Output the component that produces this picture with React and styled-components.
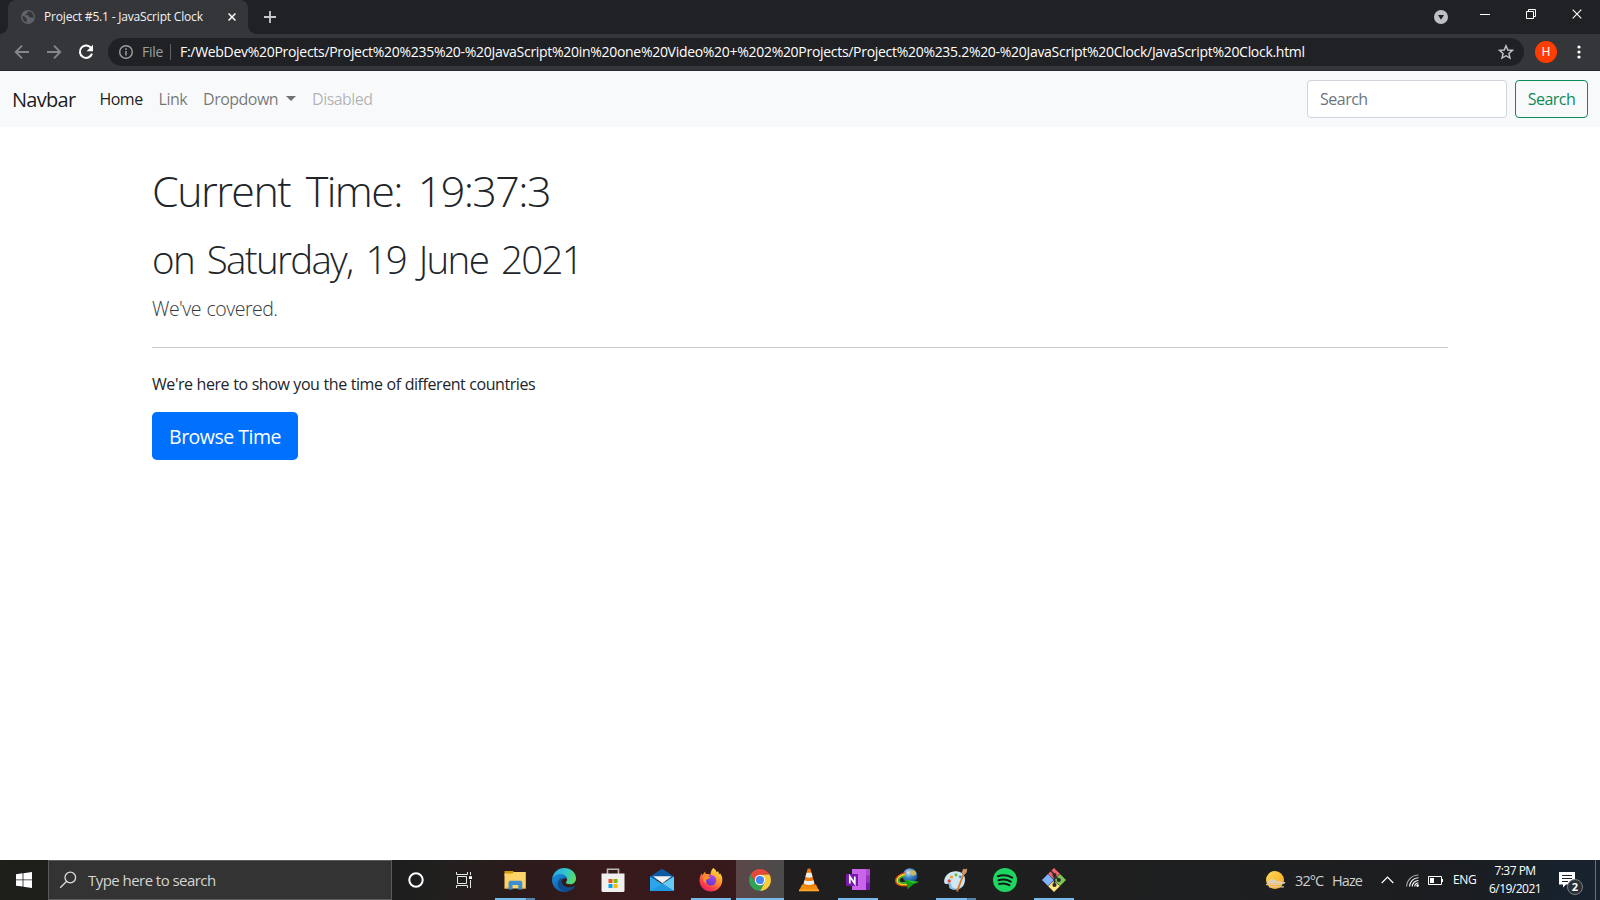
import React from 'react';
import styled, { createGlobalStyle, css } from 'styled-components';

const GlobalStyle = createGlobalStyle`
  * { box-sizing: border-box; }
  html, body { margin: 0; padding: 0; overflow: hidden; }
  body { font-family: "Open Sans", "Noto Sans", sans-serif; background: #fff; color: #212529; }
  svg { display: block; flex: none; }
  button, input { font-family: inherit; margin: 0; }
`;

const Screen = styled.div`
  width: 1600px;
  height: 900px;
  display: flex;
  flex-direction: column;
  white-space: nowrap;
`;

/* ---------- Browser chrome ---------- */
const TabStrip = styled.header`
  height: 34px;
  background: #202124;
  display: flex;
  padding-left: 8px;
`;
const Tab = styled.div`
  position: relative;
  width: 240px;
  height: 34px;
  padding: 0 12px 0 13px;
  display: flex;
  align-items: center;
  background: #35363a;
  border-radius: 8px 8px 0 0;
  &::before, &::after {
    content: "";
    position: absolute;
    bottom: 0;
    width: 8px;
    height: 8px;
  }
  &::before { left: -8px; background: radial-gradient(circle at 0 0, transparent 7.5px, #35363a 8px); }
  &::after { right: -8px; background: radial-gradient(circle at 100% 0, transparent 7.5px, #35363a 8px); }
`;
const TabTitle = styled.span`
  flex: 1;
  margin-left: 9px;
  font-size: 12px;
  line-height: 16px;
  letter-spacing: -0.18px;
  color: #f1f3f4;
`;
const NewTab = styled.div`
  width: 28px;
  margin-left: 8px;
  display: grid;
  place-items: center;
`;
const WindowControls = styled.div`
  margin-left: auto;
  display: flex;
  align-items: flex-start;
`;
const TabSearch = styled.div`
  padding: 10px 14px 0 0;
`;
const WindowButton = styled.div`
  width: 46px;
  height: 28px;
  display: grid;
  place-items: center;
`;
const Toolbar = styled.div`
  height: 37px;
  background: #35363a;
  border-bottom: 1px solid #27282b;
  display: flex;
  align-items: center;
  padding: 0 19px 0 14px;
`;
const NavIcons = styled.div`
  display: flex;
  gap: 16px;
  width: 94px;
`;
const AddressBar = styled.div`
  flex: 1;
  height: 28px;
  border-radius: 14px;
  background: #202124;
  display: flex;
  align-items: center;
  padding: 0 10px;
  font-size: 14px;
  line-height: 20px;
`;
const Scheme = styled.span`
  width: 29px;
  margin-left: 8px;
  color: #9aa0a6;
  letter-spacing: -0.3px;
  border-right: 1px solid #5f6368;
  line-height: 16px;
`;
const Address = styled.span`
  flex: 1;
  margin-left: 9px;
  color: #fff;
  letter-spacing: -0.297px;
`;
const Avatar = styled.div`
  width: 22px;
  height: 22px;
  margin: 0 20px 0 11px;
  border-radius: 50%;
  background: #ff3d00;
  color: #fff;
  font: 12px/22px Roboto, sans-serif;
  text-align: center;
`;

/* ---------- Web page ---------- */
const Navbar = styled.nav`
  height: 56px;
  padding: 0 12px;
  background: #f8f9fa;
  display: flex;
  align-items: center;
`;
const Brand = styled.span`
  width: 79.5px;
  padding-top: 1px;
  font-size: 20px;
  line-height: 30px;
  letter-spacing: -0.7px;
  color: rgba(0, 0, 0, 0.9);
`;
const NavLink = styled.span`
  padding: 0 8px;
  display: flex;
  align-items: center;
  font-size: 16px;
  line-height: 24px;
  letter-spacing: -0.53px;
  color: ${(p) => (p.$active ? 'rgba(0,0,0,.9)' : p.$disabled ? 'rgba(0,0,0,.3)' : 'rgba(0,0,0,.55)')};
`;
const Caret = styled.i`
  margin: -2px 0 0 8px;
  border: 5px solid transparent;
  border-top-color: currentColor;
  border-bottom: 0;
`;
const SearchForm = styled.form`
  margin-left: auto;
  display: flex;
  gap: 8px;
`;
const SearchInput = styled.input`
  width: 200px;
  height: 38px;
  padding: 0 12px;
  border: 1px solid #ced4da;
  border-radius: 4px;
  background: #fff;
  font-size: 16px;
  letter-spacing: -0.5px;
  &::placeholder { color: #6c757d; opacity: 1; }
`;
const SearchButton = styled.button`
  width: 73px;
  height: 38px;
  padding: 0;
  border: 1px solid #0d8a5a;
  border-radius: 4px;
  background: transparent;
  color: #0d8a5a;
  font-size: 16px;
  letter-spacing: -0.5px;
`;
const Main = styled.main`
  flex: 1;
  padding: 37px 152px 0;
`;
const Title = styled.h1`
  margin: 0 0 17px;
  font-weight: 300;
  font-size: 43px;
  line-height: 54px;
  letter-spacing: -1.55px;
  word-spacing: 6px;
`;
const Subtitle = styled.h2`
  margin: 0 0 11px;
  font-weight: 300;
  font-size: 38.5px;
  line-height: 48px;
  letter-spacing: -1.7px;
  word-spacing: 4.5px;
`;
const Lead = styled.p`
  margin: 0;
  font-weight: 300;
  font-size: 19.5px;
  line-height: 30px;
  letter-spacing: -0.5px;
  word-spacing: 1px;
  color: #343a40;
`;
const Rule = styled.hr`
  margin: 23px 0 24px;
  height: 1px;
  border: 0;
  background: #c7c9ca;
`;
const Copy = styled.p`
  margin: 0 0 16px;
  font-size: 16px;
  line-height: 24px;
  letter-spacing: -0.44px;
  word-spacing: 0.3px;
`;
const PrimaryButton = styled.button`
  width: 146px;
  height: 48px;
  padding: 0;
  border: 0;
  border-radius: 4.8px;
  background: #0070ff;
  color: #fff;
  font-size: 19.5px;
  letter-spacing: -0.5px;
`;

/* ---------- Taskbar ---------- */
const Taskbar = styled.footer`
  height: 40px;
  display: flex;
  background: linear-gradient(90deg, #1e1e1a 0, #1d1d1d 390px, #21201f 440px, #2b1b1b 520px, #381a1c 610px, #38191b 730px, #201e1e 785px, #1e1f20 1200px, #1b1d20 1460px, #18222c 1560px, #19232d 1600px);
`;
const StartButton = styled.div`
  width: 48px;
  display: grid;
  place-items: center;
`;
const TaskSearch = styled.div`
  width: 344px;
  height: 40px;
  padding-left: 10px;
  display: flex;
  align-items: center;
  background: #333;
  border: 1px solid #5b5b5b;
  color: #d4d4d4;
  font-size: 15px;
  letter-spacing: -0.55px;
`;
const TaskSearchText = styled.span`
  margin-left: 11px;
`;
const SystemButtons = styled.div`
  display: flex;
  width: 98.5px;
`;
const SystemButton = styled.div`
  width: 48px;
  display: grid;
  place-items: center;
`;
const Apps = styled.div`
  display: flex;
`;
const TaskbarApp = styled.div`
  width: 49px;
  height: 40px;
  display: flex;
  justify-content: center;
  align-items: center;
  background: linear-gradient(#76b9ed, #76b9ed) no-repeat 50% 100% / ${(p) => (p.$running ? '40px 2px' : '0 0')};
  ${(p) => p.$stacked && css`
    background: linear-gradient(90deg, #76b9ed 31px, #3f5f7a 31px, #5583aa 32px) no-repeat 50% 100% / 40px 2px;
  `}
  ${(p) => p.$focused && css`
    background:
      linear-gradient(#76b9ed, #76b9ed) no-repeat 50% 100% / 48px 2px,
      linear-gradient(90deg, #5d4748, #4b4b4b) no-repeat 50% 0 / 48px 40px;
  `}
`;
const Tray = styled.div`
  margin-left: auto;
  display: flex;
  align-items: center;
  color: #fff;
`;
const Weather = styled.div`
  display: flex;
  align-items: center;
  width: 115.5px;
  color: #cfcfcf;
  font-size: 14.5px;
  letter-spacing: -0.9px;
`;
const Temperature = styled.span`
  width: 37px;
  margin-left: 9px;
`;
const Condition = styled.span`
  letter-spacing: -0.9px;
`;
const TrayIcons = styled.div`
  display: flex;
  align-items: center;
  gap: 12px;
`;
const NetworkIcons = styled.div`
  display: flex;
  align-items: center;
  gap: 9.5px;
`;
const Language = styled.span`
  width: 24px;
  margin: -2px 0 0 10px;
  font-size: 12px;
  letter-spacing: -0.4px;
`;
const Clock = styled.div`
  width: 54px;
  margin-left: 11px;
  text-align: center;
  font-size: 12px;
  line-height: 18px;
  letter-spacing: -0.52px;
`;
const Notifications = styled.div`
  position: relative;
  width: 24px;
  height: 40px;
  margin-left: 17px;
  padding-top: 12px;
`;
const Badge = styled.span`
  position: absolute;
  left: 8px;
  top: 19px;
  width: 16px;
  height: 16px;
  border-radius: 50%;
  border: 1px solid #7b8085;
  background: #2b3035;
  font: bold 11px/14px "Open Sans", sans-serif;
  text-align: center;
`;
const ShowDesktop = styled.div`
  width: 5px;
  height: 40px;
  margin-left: 12px;
  border-left: 1px solid #6b7178;
`;

/* ---------- Icons ---------- */
const Globe = () => (
  <svg width="14" height="14" viewBox="0 0 14 14">
    <circle cx="7" cy="7" r="7" fill="#5f6368" />
    <path d="M1.3 6.2c1.8-.2 3 .4 3.2 1.6.2.9 1.3.7 1.5 1.5.2.8-.6 1.5-.4 2.9C3 11.6 1.2 9.4 1.3 6.2z M7.3 1.3c-1 .8-.3 1.7-1.3 2.1-.8.4-1.5.8-1 1.5.6.8 1.9.2 2.7.9.7.6.5 1.5 1.5 1.7 1.1.2 1.3-.6 2.1-.2.7.3.5 1.5 1.2 1.3C13.4 4.7 11 1.5 7.3 1.3z" fill="#35363a" />
  </svg>
);
const Cross = ({ size, width }) => (
  <svg width={size} height={size} viewBox="0 0 10 10"><path d="M.7.7l8.6 8.6M9.3.7L.7 9.3" stroke="#fff" strokeWidth={width} /></svg>
);
const Plus = () => (
  <svg width="12" height="12" viewBox="0 0 12 12"><path d="M6 0v12M0 6h12" stroke="#c8cacd" strokeWidth="1.8" /></svg>
);
const Arrow = ({ flip }) => (
  <svg width="16" height="16" viewBox="0 0 16 16"><path transform={flip ? 'translate(16 0) scale(-1 1)' : undefined} d="M15 8H2.5M8 1.7L1.7 8 8 14.3" fill="none" stroke="#85878a" strokeWidth="1.8" /></svg>
);
const Reload = () => (
  <svg width="16" height="16" viewBox="0 0 16 16">
    <path d="M13.3 4.3A6.2 6.2 0 1 0 14 9.6" fill="none" stroke="#fff" strokeWidth="2" />
    <path d="M15 .8v6.4H8.6z" fill="#fff" />
  </svg>
);
const Info = () => (
  <svg width="16" height="16" viewBox="0 0 16 16"><circle cx="8" cy="8" r="6.3" fill="none" stroke="#9aa0a6" strokeWidth="1.4" /><path d="M8 7v4.5M8 4.3v1.6" stroke="#9aa0a6" strokeWidth="1.5" /></svg>
);
const Star = () => (
  <svg width="16" height="16" viewBox="0 0 16 16"><path d="M8 1.7l1.8 4.3 4.7.4-3.6 3.1 1.1 4.6L8 11.7 4 14.1l1.1-4.6L1.5 6.4l4.7-.4z" fill="none" stroke="#c4c7c9" strokeWidth="1.4" /></svg>
);
const Kebab = () => (
  <svg width="4" height="14" viewBox="0 0 4 14"><circle cx="2" cy="2" r="1.6" fill="#fff" /><circle cx="2" cy="7" r="1.6" fill="#fff" /><circle cx="2" cy="12" r="1.6" fill="#fff" /></svg>
);
const TabSearchIcon = () => (
  <svg width="14" height="14" viewBox="0 0 14 14"><circle cx="7" cy="7" r="7" fill="#bdc1c6" /><path d="M4 5h6L7 9.8z" fill="#202124" /></svg>
);
const Minimize = () => (
  <svg width="10" height="10" viewBox="0 0 10 10"><path d="M0 5.5h10" stroke="#fff" /></svg>
);
const Restore = () => (
  <svg width="10" height="10" viewBox="0 0 10 10"><path d="M.5 2.5h7v7h-7zM2.5 2.5v-2h7v7h-2" fill="none" stroke="#fff" /></svg>
);

const WindowsLogo = () => (
  <svg width="16" height="16" viewBox="0 0 16 16"><path d="M0 2.2L6.6 1.3v6.2H0zM7.4 1.2L16 0v7.5H7.4zM0 8.3h6.6v6.3L0 13.7zM7.4 8.3H16V16l-8.6-1.2z" fill="#fff" /></svg>
);
const Magnifier = () => (
  <svg width="18" height="18" viewBox="0 0 18 18"><circle cx="11.3" cy="6.5" r="5.3" fill="none" stroke="#dcdcdc" strokeWidth="1.3" /><path d="M7.5 10.5L1.2 16.8" stroke="#dcdcdc" strokeWidth="1.3" /></svg>
);
const Cortana = () => (
  <svg width="16" height="16" viewBox="0 0 16 16"><circle cx="8" cy="8" r="6.7" fill="none" stroke="#fff" strokeWidth="2" /></svg>
);
const TaskView = () => (
  <svg width="16" height="16" viewBox="0 0 16 16"><path d="M.5 0v2.5h11V0M.5 16v-2.5h11V16M1.5 4.5h9v7h-9zM14.5 0v3M14.5 8v8" fill="none" stroke="#e6e6e6" /><path d="M13 4.2h3v2.8h-3z" fill="#fff" /></svg>
);
const Folder = () => (
  <svg width="24" height="24" viewBox="0 0 24 24">
    <path d="M1.5 3h8.7l1 1.5h11V8H1.5z" fill="#d39a0b" />
    <path d="M1.5 5.5h8l1.3-1.5h12V20.5H1.5z" fill="#fcd468" />
    <path d="M5.5 21.5v-7l1.2-1.7h11.4l1.2 1.7v7h-4v-4.5H9.5v4.5z" fill="#3e8ed0" />
    <path d="M1.5 19.5h4v1h-4zM19.3 19.5h3.5v1h-3.5z" fill="#eab53c" />
  </svg>
);
const Edge = () => (
  <svg width="24" height="24" viewBox="0 0 24 24">
    <defs>
      <linearGradient id="edgeTop" x1="0" y1=".3" x2="1" y2=".6"><stop offset="0" stopColor="#2aa8e0" /><stop offset=".5" stopColor="#30c6cf" /><stop offset="1" stopColor="#5ddb61" /></linearGradient>
      <linearGradient id="edgeLow" x1="0" y1="0" x2=".6" y2="1"><stop offset="0" stopColor="#1c92dd" /><stop offset="1" stopColor="#0b59a8" /></linearGradient>
    </defs>
    <path d="M.2 10.5C1.3 4.3 6 0 12.2 0 19 0 24 4.5 24 10.3c0 4-2.8 6-6 6-2.6 0-4.1-.7-4.1-1.7 0-.7 1.2-1.2 1.2-3.1 0-2.3-2.2-4.4-5.6-4.4-4 0-7.2 1.5-9.3 3.4z" fill="url(#edgeTop)" />
    <path d="M.1 11C1.5 7.3 5.8 5.8 9 6c3.6.2 6.1 2.7 6.1 5-1.4-1.3-5.6-1-6.1 2.7-.5 4.2 3.5 8.2 7.6 9.2C14.2 24 11.5 24.2 9 23.6 3.5 22.2-.6 17 .1 11z" fill="url(#edgeLow)" />
    <path d="M9.5 9.8c-2.7 1.5-4 4.2-3.5 7 .6 3.8 4.5 6.8 8.7 7 3.6-.5 6.4-2.4 8.2-5.2.3-.6-.2-.9-.7-.6-5.5 2.9-12 .4-12.7-4.3-.2-1.5 0-2.8 0-3.9z" fill="#114a8b" />
  </svg>
);
const Store = () => (
  <svg width="24" height="24" viewBox="0 0 24 24">
    <path d="M6.5 7V1.3h11V7" fill="none" stroke="#b9b9b9" strokeWidth="1.6" />
    <path d="M.5 5.5h23V22.5a1.5 1.5 0 0 1-1.5 1.5H2a1.5 1.5 0 0 1-1.5-1.5z" fill="#f0f0f0" />
    <path d="M7.5 11h4v4h-4z" fill="#f0501f" /><path d="M12.5 11h4v4h-4z" fill="#7fba00" /><path d="M7.5 16h4v4h-4z" fill="#00a4ef" /><path d="M12.5 16h4v4h-4z" fill="#ffb900" />
  </svg>
);
const Mail = () => (
  <svg width="24" height="24" viewBox="0 0 24 24">
    <path d="M0 8.5L12 .8l12 7.7V12H0z" fill="#0c59a4" />
    <path d="M3 8.3h18.5l-9 7z" fill="#f2f2f2" />
    <path d="M0 8.5L24 23H0z" fill="#2ba6ea" />
    <path d="M24 8.5V23L12.2 15.7z" fill="#63cbf7" />
    <path d="M0 23l12.2-7.3L24 23z" fill="#2199e2" />
  </svg>
);
const Firefox = () => (
  <svg width="24" height="24" viewBox="0 0 24 24">
    <defs>
      <linearGradient id="foxFire" x1=".85" y1="0" x2=".2" y2="1"><stop offset="0" stopColor="#fff04a" /><stop offset=".4" stopColor="#ff9a2b" /><stop offset=".75" stopColor="#ff4247" /><stop offset="1" stopColor="#e3196f" /></linearGradient>
      <linearGradient id="foxGlobe" x1=".8" y1="0" x2=".3" y2="1"><stop offset="0" stopColor="#b146f0" /><stop offset="1" stopColor="#5a3bcb" /></linearGradient>
    </defs>
    <path d="M14.2 0c1.5.8 3 2.5 3.5 4.5l1.3-1.5c.6 1.2.9 2 1 3.2l1.2-.7C23 8 23.5 10 23.3 12.5 22.9 18.8 18 23.5 11.8 23.5 5.5 23.5.5 18.7.5 12.5c0-3 1-5.3 2.4-7.2L3 7.5l3.2-4c0 1.2.3 2 .8 2.5 2-.3 3 0 4.5.8C11.5 4.5 12.3 2 14.2 0z" fill="url(#foxFire)" />
    <circle cx="12" cy="12.3" r="5.2" fill="url(#foxGlobe)" />
    <path d="M4 8.5c3-1.2 5-.7 7.5 1.2-1 1.1-3 .8-4 2-.8 1.1-.7 2.5.3 3.8-3-1-4.5-3.5-3.8-7z" fill="#ff8f22" />
  </svg>
);
const Chrome = () => (
  <svg width="24" height="24" viewBox="0 0 24 24">
    <g transform="translate(12 12)">
      <path d="M-9.5-5.5A11 11 0 0 1 9.5-5.5L0-5.2-4.5 2.6z" fill="#e5493a" />
      <path d="M9.5-5.5A11 11 0 0 1 0 11L4.5 2.6 0-5.2z" fill="#fccb3a" />
      <path d="M0 11A11 11 0 0 1-9.5-5.5L-4.5 2.6 4.5 2.6z" fill="#30a355" />
      <circle r="5.2" fill="#fff" /><circle r="4.1" fill="#4285f4" />
    </g>
  </svg>
);
const Vlc = () => (
  <svg width="24" height="24" viewBox="0 0 24 24">
    <path d="M5 16.5h14l3 6.5H2z" fill="#f28a0c" />
    <path d="M2 21.5h20v1.8H2z" fill="#ffa62e" />
    <path d="M10.6.8q1.4-.7 2.8 0L17.8 17Q12 20.5 6.2 17z" fill="#f07b09" />
    <path d="M9.6 4.7h4.8l1.2 4.2q-3.6 1.5-7.2 0zM7.5 12.2q4.5 1.8 9 0l.9 3.3q-5.4 3-10.8 0z" fill="#eceff1" />
  </svg>
);
const OneNote = () => (
  <svg width="24" height="24" viewBox="0 0 24 24">
    <path d="M6 1h18v21H6z" fill="#ca64ea" /><path d="M20 1h4v21h-4z" fill="#ae4bd5" /><path d="M20 7.5h4v7h-4z" fill="#9332bf" /><path d="M20 14.5h4V22h-4z" fill="#7719aa" />
    <path d="M0 6h12v12H0z" fill="#7719aa" />
    <path d="M3.8 15.5V8.5l5 7v-7" fill="none" stroke="#fff" strokeWidth="1.7" />
  </svg>
);
const DownloadManager = () => (
  <svg width="24" height="24" viewBox="0 0 24 24">
    <defs><radialGradient id="idmGlobe" cx=".4" cy=".3" r=".7"><stop offset="0" stopColor="#d3e6f6" /><stop offset=".5" stopColor="#3f86cc" /><stop offset="1" stopColor="#154d8c" /></radialGradient></defs>
    <circle cx="15" cy="7.7" r="7.4" fill="url(#idmGlobe)" /><path d="M15.5 2.5c3-1 5.5.5 5.7 2.7s-2 2.8-3.7 2.3S14.5 4 15.5 2.5z" fill="#cdb957" />
    <path d="M10 5C5 6 .5 9 .7 13c.3 3.5 4 5.5 11.3 4.7" fill="none" stroke="#d9451f" strokeWidth="1.4" />
    <path d="M10 6.3C5.5 7.2 1.8 10 2.1 13c.3 2.7 4 4 9.9 3.3" fill="none" stroke="#f4d51f" strokeWidth="1.7" />
    <path d="M10 8C6.5 8.7 3.5 10.8 3.8 13c.3 1.7 4 2.3 8.2 1.6" fill="none" stroke="#43b934" strokeWidth="1.7" />
    <path d="M9.5 11.5L24 14l-5.5 2.3-6 5-.5-4.5z" fill="#129a1a" /><path d="M11.5 12.2L24 14l-6.5 1z" fill="#2fca35" />
  </svg>
);
const Paint = () => (
  <svg width="24" height="24" viewBox="0 0 24 24">
    <path d="M10 3.5c7-1 11 3 11 8 0 6-4 10-10 10-5 0-6-2-5.5-3.5.6-2-.4-2.5-2.5-2C.5 16.5-.5 14 .5 11c1.3-4 4.5-7 9.5-7.5z" fill="#cfe6f3" />
    <path d="M1 15.5c1 1 2.8.3 4 1 1 .7-.5 2.5 1.5 4 3.5 2.5 12 1 14-5-2 4-7 6-11 4.5-3-1-1-4-3.5-5-1.5-.5-3.5.8-5 .5z" fill="#8abfdd" />
    <circle cx="5.2" cy="13" r="1.7" fill="#e5443b" /><circle cx="7.5" cy="9" r="1.6" fill="#f3a01d" /><circle cx="12" cy="6.8" r="1.6" fill="#79b93c" /><circle cx="16.3" cy="8.8" r="1.4" fill="#3c91d4" />
    <path d="M19.5 4l1.5.8L14 23.5l-1.5.5.2-2.5z" fill="#dc7c25" /><path d="M17.7 4.8l1.5-4 1.8.4 2.2-.8-.5 3.8-2.2 2.6z" fill="#c99a67" />
  </svg>
);
const Spotify = () => (
  <svg width="24" height="24" viewBox="0 0 24 24"><circle cx="12" cy="12" r="12" fill="#1ed760" /><path d="M4.8 8.2q7.7-2.3 14.4 1.4M5.6 12.3q6.5-2 12.2 1.4M6.2 16q5.6-1.5 10.2 1.2" fill="none" stroke="#151a17" strokeWidth="2" strokeLinecap="round" /></svg>
);
const Git = () => (
  <svg width="24" height="24" viewBox="0 0 24 24">
    <path d="M12 0l5.8 5.8L12 11.6 6.2 5.8z" fill="#f4646c" /><path d="M6 6l5.8 6L6 18 0 12z" fill="#80b3ff" /><path d="M18 6l6 6-6 6-5.8-6z" fill="#7fc653" /><path d="M12 12.4l5.8 5.8L12 24l-5.8-5.8z" fill="#ffe681" />
    <path d="M8.5 2.5l4 4V18M12.5 7.5l4 4" fill="none" stroke="#2a2a2a" strokeWidth="1.6" /><circle cx="12.5" cy="7" r="2.1" fill="#2a2a2a" /><circle cx="12.5" cy="17" r="2.1" fill="#2a2a2a" /><circle cx="16.8" cy="12" r="2.1" fill="#2a2a2a" />
  </svg>
);
const HazeIcon = () => (
  <svg width="21" height="20" viewBox="0 0 21 20">
    <defs><linearGradient id="sun" x1="0" y1="0" x2="1" y2="1"><stop offset="0" stopColor="#ffd95a" /><stop offset="1" stopColor="#f9a31a" /></linearGradient></defs>
    <circle cx="10" cy="10" r="9" fill="url(#sun)" />
    <path d="M3 13.5q-1.5-1.7.5-2.5 1-.2 1.5-1.2 1.5-1.5 3.5-.3 2.5.2 3 1.5 3.5-.5 5 1h3.5q1 1.5-1.5 1.7z" fill="#dcd0bd" />
    <path d="M1.5 14.7h14.5M4.5 16.8h14" stroke="#e8c894" strokeWidth="1.3" strokeLinecap="round" />
  </svg>
);
const Chevron = () => (
  <svg width="13" height="8" viewBox="0 0 13 8"><path d="M.7 7L6.5 1.2 12.3 7" fill="none" stroke="#fff" strokeWidth="1.2" /></svg>
);
const Wifi = () => (
  <svg width="13" height="13" viewBox="0 0 13 13">
    <path d="M.6 12.5A12 12 0 0 1 12.5 1" fill="none" stroke="#a9a9a9" strokeWidth="1.1" />
    <path d="M3.5 12.5a9 9 0 0 1 9-8.7M6.2 12.5a6.3 6.3 0 0 1 6.3-6M8.7 12.5a3.8 3.8 0 0 1 3.8-3.5" fill="none" stroke="#fff" strokeWidth="1.1" /><circle cx="11.6" cy="11.6" r="1.3" fill="#fff" />
  </svg>
);
const Battery = () => (
  <svg width="15" height="9" viewBox="0 0 15 9"><path d="M.5.5h13v8H.5z" fill="none" stroke="#fff" /><path d="M2 2h4v5H2zM14 3h1v3h-1z" fill="#fff" /></svg>
);
const NoteIcon = () => (
  <svg width="16" height="16" viewBox="0 0 16 16"><path d="M0 0h16v12.5H7L4 15.5v-3H0z" fill="#fff" /><path d="M3 3.5h10M3 6.5h10M3 9.5h6" stroke="#1a222b" /></svg>
);

const apps = [
  { id: 'explorer', Icon: Folder, stacked: true },
  { id: 'edge', Icon: Edge },
  { id: 'store', Icon: Store },
  { id: 'mail', Icon: Mail },
  { id: 'firefox', Icon: Firefox, running: true },
  { id: 'chrome', Icon: Chrome, focused: true },
  { id: 'vlc', Icon: Vlc },
  { id: 'onenote', Icon: OneNote, running: true },
  { id: 'idm', Icon: DownloadManager },
  { id: 'paint', Icon: Paint, stacked: true },
  { id: 'spotify', Icon: Spotify },
  { id: 'git', Icon: Git, running: true },
];

export default function App() {
  return (
    <Screen>
      <GlobalStyle />
      <TabStrip>
        <Tab>
          <Globe />
          <TabTitle>Project #5.1 - JavaScript Clock</TabTitle>
          <Cross size={8} width={1.9} />
        </Tab>
        <NewTab><Plus /></NewTab>
        <WindowControls>
          <TabSearch><TabSearchIcon /></TabSearch>
          <WindowButton><Minimize /></WindowButton>
          <WindowButton><Restore /></WindowButton>
          <WindowButton><Cross size={10} width={1.1} /></WindowButton>
        </WindowControls>
      </TabStrip>
      <Toolbar>
        <NavIcons><Arrow /><Arrow flip /><Reload /></NavIcons>
        <AddressBar>
          <Info />
          <Scheme>File</Scheme>
          <Address>F:/WebDev%20Projects/Project%20%235%20-%20JavaScript%20in%20one%20Video%20+%202%20Projects/Project%20%235.2%20-%20JavaScript%20Clock/JavaScript%20Clock.html</Address>
          <Star />
        </AddressBar>
        <Avatar>H</Avatar>
        <Kebab />
      </Toolbar>

      <Navbar>
        <Brand>Navbar</Brand>
        <NavLink $active>Home</NavLink>
        <NavLink>Link</NavLink>
        <NavLink>Dropdown<Caret /></NavLink>
        <NavLink $disabled>Disabled</NavLink>
        <SearchForm>
          <SearchInput placeholder="Search" />
          <SearchButton type="button">Search</SearchButton>
        </SearchForm>
      </Navbar>
      <Main>
        <Title>Current Time: 19:37:3</Title>
        <Subtitle>on Saturday, 19 June 2021</Subtitle>
        <Lead>We've covered.</Lead>
        <Rule />
        <Copy>We're here to show you the time of different countries</Copy>
        <PrimaryButton>Browse Time</PrimaryButton>
      </Main>

      <Taskbar>
        <StartButton><WindowsLogo /></StartButton>
        <TaskSearch><Magnifier /><TaskSearchText>Type here to search</TaskSearchText></TaskSearch>
        <SystemButtons>
          <SystemButton><Cortana /></SystemButton>
          <SystemButton><TaskView /></SystemButton>
        </SystemButtons>
        <Apps>
          {apps.map(({ id, Icon, running, stacked, focused }) => (
            <TaskbarApp key={id} $running={running} $stacked={stacked} $focused={focused}><Icon /></TaskbarApp>
          ))}
        </Apps>
        <Tray>
          <Weather><HazeIcon /><Temperature>32°C</Temperature><Condition>Haze</Condition></Weather>
          <TrayIcons>
            <Chevron />
            <NetworkIcons><Wifi /><Battery /></NetworkIcons>
          </TrayIcons>
          <Language>ENG</Language>
          <Clock>7:37 PM<br />6/19/2021</Clock>
          <Notifications><NoteIcon /><Badge>2</Badge></Notifications>
          <ShowDesktop />
        </Tray>
      </Taskbar>
    </Screen>
  );
}
